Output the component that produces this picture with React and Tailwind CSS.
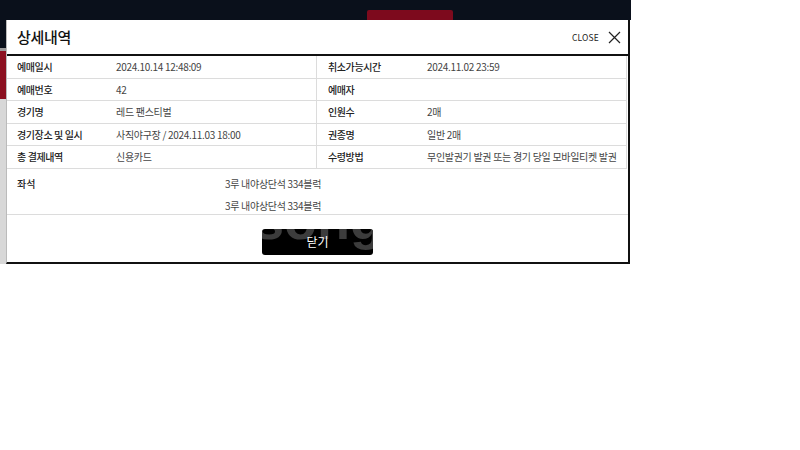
const font = { fontFamily: '"Noto Sans CJK KR", "Noto Sans", sans-serif' };

const leftRows = [
  ["예매일시", "2024.10.14 12:48:09"],
  ["예매번호", "42"],
  ["경기명", "레드 팬스티벌"],
  ["경기장소 및 일시", "사직야구장 / 2024.11.03 18:00"],
  ["총 결제내역", "신용카드"],
];

const rightRows = [
  ["취소가능시간", "2024.11.02 23:59"],
  ["예매자", ""],
  ["인원수", "2매"],
  ["권종명", "일반 2매"],
  ["수령방법", "무인발권기 발권 또는 경기 당일 모바일티켓 발권"],
];

function Row({ label, value, padLeft }) {
  return (
    <div className={`flex items-center h-[22.5px] border-b border-[#dcdcdc] ${padLeft}`}>
      <span className="w-[99px] shrink-0 text-[10px] font-medium text-[#222] tracking-[-0.04em]">
        {label}
      </span>
      <span className="text-[10px] text-[#444] tracking-[-0.03em] whitespace-nowrap">{value}</span>
    </div>
  );
}

export default function App() {
  return (
    <div className="w-[800px] h-[450px] bg-white" style={font}>
      <div className="relative w-[631px] h-[264px] overflow-hidden">
        {/* page behind the modal */}
        <div className="h-[20px] bg-[#0a101b] relative">
          <div className="absolute left-[367px] top-[10px] w-[86px] h-[10px] bg-[#7d0a1d] rounded-t-[2px]" />
        </div>
        <div className="flex flex-col w-[6px]">
          <div className="h-[28px] bg-[#0a101b]" />
          <div className="h-[3px] bg-[#9a9a9a]" />
          <div className="h-[48px] bg-[#8c1020]" />
          <div className="h-[170px] bg-[#d8d8d8]" />
        </div>

        {/* modal */}
        <div className="absolute left-[6px] top-[20px] w-[624px] h-[244px] bg-white border-r-2 border-b-2 border-[#111] border-l border-l-[#bbb] flex flex-col">
          <div className="h-[36px] flex items-center justify-between pl-[10px] pr-[7px] border-b-2 border-[#111]">
            <h1 className="text-[15px] font-medium text-[#111] tracking-[-0.02em]">상세내역</h1>
            <div className="flex items-center gap-[9px]">
              <span className="text-[8.5px] text-[#222] tracking-[0.02em]">CLOSE</span>
              <svg width="13" height="13" viewBox="0 0 13 13" fill="none" stroke="#222" strokeWidth="1.2">
                <path d="M1 1 L12 12 M12 1 L1 12" />
              </svg>
            </div>
          </div>

          <div className="grid grid-cols-[310px_1fr]">
            <div className="border-r border-[#dcdcdc]">
              {leftRows.map(([l, v]) => (
                <Row key={l} label={l} value={v} padLeft="pl-[10px]" />
              ))}
            </div>
            <div className="border-r border-[#dcdcdc] mr-[1px]">
              {rightRows.map(([l, v]) => (
                <Row key={l} label={l} value={v} padLeft="pl-[11px]" />
              ))}
            </div>
          </div>

          <div className="flex h-[46px] border-b border-[#dcdcdc] pl-[10px] pt-[4px]">
            <span className="w-[208px] shrink-0 text-[10px] font-medium text-[#222] leading-[22px]">좌석</span>
            <div className="flex flex-col text-[10px] text-[#444] tracking-[-0.03em] leading-[22px]">
              <span>3루 내야상단석 334블럭</span>
              <span>3루 내야상단석 334블럭</span>
            </div>
          </div>

          <div className="flex justify-center pt-[14px]">
            <button className="relative overflow-hidden w-[111px] h-[26px] bg-black rounded-[3px] text-white text-[12px] flex items-center justify-center">
              <span
                aria-hidden="true"
                className="pointer-events-none select-none absolute left-[-8px] top-[-36px] text-[54px] font-bold text-[#3c3c3c] leading-none"
                style={{ fontFamily: '"Liberation Sans", sans-serif' }}
              >
                song
              </span>
              <span className="relative">닫기</span>
            </button>
          </div>
        </div>
      </div>
    </div>
  );
}
